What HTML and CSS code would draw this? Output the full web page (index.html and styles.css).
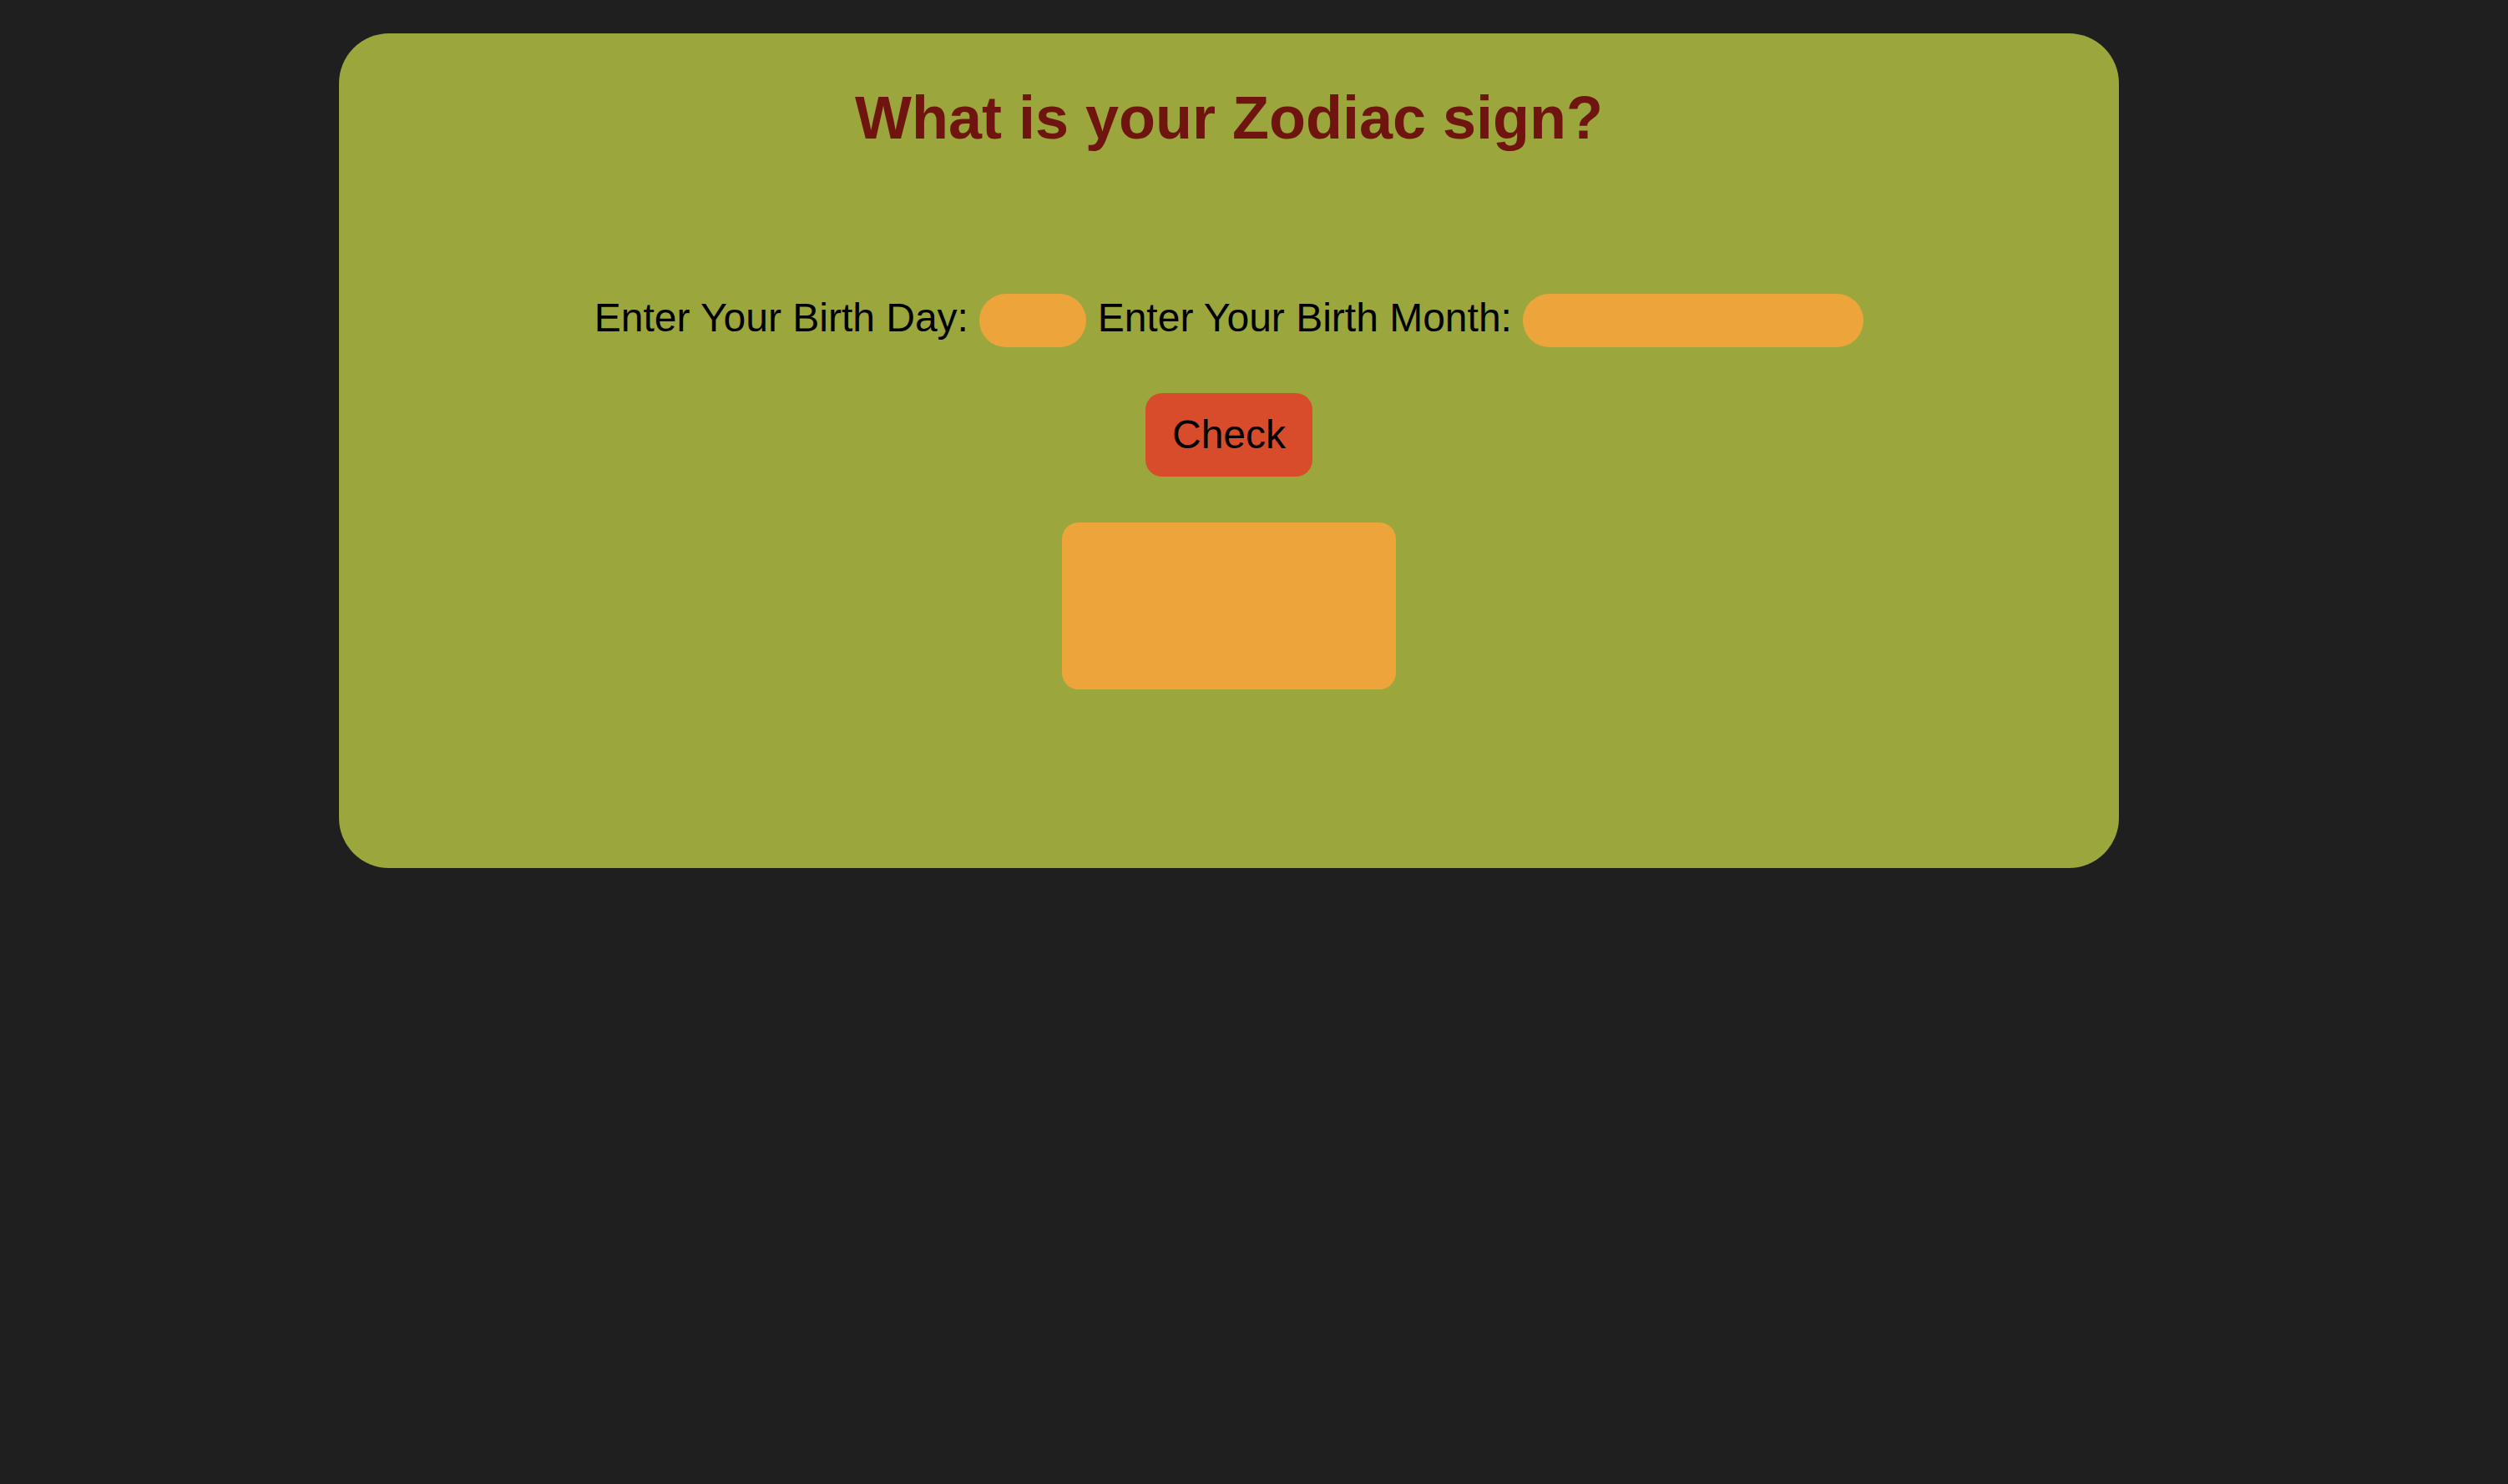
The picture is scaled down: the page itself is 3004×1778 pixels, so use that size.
FILE: index.html
```html
<!DOCTYPE html>
<html lang="en">
<head>
<meta charset="utf-8">
<title>Zodiac sign</title>
<link rel="stylesheet" href="styles.css">
</head>
<body>
<main class="card">
  <h1 class="title">What is your Zodiac sign?</h1>
  <div class="form-row">
    <label class="label" for="day">Enter Your Birth Day:</label>
    <input class="field field-day" id="day" type="text">
    <label class="label" for="month">Enter Your Birth Month:</label>
    <input class="field field-month" id="month" type="text">
  </div>
  <div class="actions">
    <button class="check-btn" type="button">Check</button>
  </div>
  <div class="result"></div>
</main>
</body>
</html>
```

FILE: styles.css
```css
html, body {
  margin: 0;
  padding: 0;
  background: #1f1f1f;
}

body {
  font-family: "Liberation Sans", Arial, sans-serif;
  padding-top: 40px;
}

.card {
  box-sizing: border-box;
  width: 2132px;
  height: 1000px;
  margin-left: 406px;
  padding-top: 61px;
  background: #9ba73c;
  border-radius: 60px;
}

.title {
  margin: 0;
  font-size: 72px;
  line-height: 80px;
  font-weight: bold;
  color: #6f140f;
  text-align: center;
}

.form-row {
  margin-top: 168px;
  text-align: center;
  font-size: 48px;
  line-height: 64px;
  color: #000;
}

.label {
  vertical-align: baseline;
}

.field {
  box-sizing: border-box;
  height: 64px;
  border: none;
  outline: none;
  padding: 0 16px;
  margin: 0;
  background: #eda53b;
  border-radius: 32px;
  vertical-align: middle;
  font-family: inherit;
  font-size: 32px;
}

.field-day {
  width: 128px;
}

.field-month {
  width: 408px;
}

.actions {
  margin-top: 55px;
  text-align: center;
  line-height: 0;
}

.check-btn {
  box-sizing: border-box;
  width: 200px;
  height: 100px;
  padding: 23px 0 23px;
  border: none;
  border-radius: 20px;
  background: #d94c2b;
  color: #000;
  font-family: "Liberation Sans", Arial, sans-serif;
  font-size: 48px;
  line-height: 54px;
  cursor: pointer;
}

.result {
  width: 400px;
  height: 200px;
  margin: 55px auto 0;
  background: #eda53b;
  border-radius: 20px;
}
```
